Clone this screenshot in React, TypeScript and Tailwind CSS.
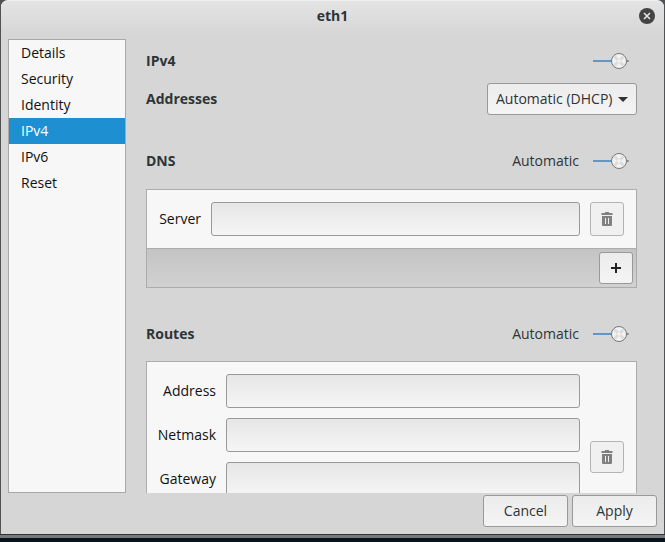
import { useId } from "react";
import type { ReactNode } from "react";

const raised =
  "rounded-[3px] border border-[#999] bg-linear-to-b from-[#ececec] to-[#f4f4f4] text-[#2e3436]";

function Switch({ label, name }: { label?: string; name: string }) {
  return (
    <label className="flex items-center gap-3.5 pr-2">
      {label && <span>{label}</span>}
      <span className="relative block h-4 w-9">
        <input
          type="checkbox"
          role="switch"
          defaultChecked
          aria-label={name}
          className="absolute inset-0 m-0 appearance-none"
        />
        <svg viewBox="0 0 36 16" className="pointer-events-none block h-4 w-9" aria-hidden="true">
          <rect x="0" y="7" width="19" height="2" fill="#5e97c8" />
          <rect x="33" y="7" width="3" height="2" rx="1" fill="#8a8d8f" />
          <circle cx="26" cy="8" r="7.5" fill="#f3f3f3" stroke="#777" />
          <path d="M21.5 3.5l9 9M30.5 3.5l-9 9" stroke="#dcdcdc" strokeWidth="3" />
          <circle cx="26" cy="8" r="1.8" fill="#f3f3f3" />
        </svg>
      </span>
    </label>
  );
}

function Section({ title, children }: { title: string; children: ReactNode }) {
  return (
    <div className="flex h-8 items-center justify-between">
      <h2 className="font-bold">{title}</h2>
      {children}
    </div>
  );
}

function Field({ label, labelWidth }: { label: string; labelWidth: string }) {
  const id = useId();
  return (
    <div className="flex items-center gap-2.5">
      <label htmlFor={id} className={`${labelWidth} flex shrink-0 justify-end text-[#111]`}>
        {label}
      </label>
      <input
        id={id}
        type="text"
        className="h-[34px] min-w-0 flex-1 rounded-[3px] border border-[#999] bg-linear-to-b from-[#e6e6e6] to-[#f5f5f5] px-2 outline-none"
      />
    </div>
  );
}

function TrashButton({ name, height }: { name: string; height: string }) {
  return (
    <button
      type="button"
      aria-label={name}
      className={`${height} flex w-[34px] shrink-0 items-center justify-center rounded-[3px] border border-[#b4b4b4] bg-[#f0f0f0]`}
    >
      <svg viewBox="0 0 12 14" className="h-3.5 w-3" fill="#808080" aria-hidden="true">
        <path d="M4 0h4v1h3.5v2H.5V1H4z" />
        <path fillRule="evenodd" d="M1 4h10v9q0 1-1 1H2q-1 0-1-1zM4 6v6h1V6zM7 6v6h1V6z" />
      </svg>
    </button>
  );
}

const pages = ["Details", "Security", "Identity", "IPv4", "IPv6", "Reset"];

export default function App() {
  return (
    <div className="flex h-screen flex-col bg-[#06131b] font-['Open_Sans','Noto_Sans',sans-serif] text-[14px] leading-5 text-[#2e3436]">
      <div className="flex min-h-0 flex-1 flex-col bg-[#505254] px-px">
        <div className="flex min-h-0 flex-1 flex-col rounded-t-[7px] border-t border-[#efefef] bg-[#d6d6d6] bg-linear-to-b from-[#e4e4e4] to-[#d6d6d6] to-[34px]">
          <header className="grid h-[30px] shrink-0 grid-cols-[1fr_auto_1fr] items-center px-[9px]">
            <h1 className="col-start-2 font-bold">eth1</h1>
            <button type="button" aria-label="Close" className="size-4 justify-self-end">
              <svg viewBox="0 0 16 16" className="size-4" aria-hidden="true">
                <circle cx="8" cy="8" r="8" fill="#444" />
                <path d="M5 5l6 6M11 5l-6 6" stroke="#e4e4e4" strokeWidth="1.6" />
              </svg>
            </button>
          </header>
          <div className="flex min-h-0 flex-1 px-[7px] pt-2">
            <nav className="w-[118px] shrink-0 border border-[#a8a8a8] bg-[#f7f7f7]">
              {pages.map((page) => (
                <a
                  key={page}
                  href="#"
                  aria-current={page === "IPv4" ? "page" : undefined}
                  className={
                    page === "IPv4"
                      ? "block h-[26px] bg-[#1e90d2] px-3 leading-[26px] text-white"
                      : "block h-[26px] px-3 leading-[26px] text-[#111]"
                  }
                >
                  {page}
                </a>
              ))}
            </nav>
            <main className="min-w-0 flex-1 overflow-hidden px-5 pt-1.5">
              <Section title="IPv4">
                <Switch name="IPv4" />
              </Section>
              <div className="mt-1.5 flex h-8 items-center justify-between">
                <label htmlFor="method" className="font-bold">
                  Addresses
                </label>
                <div className="relative">
                  <select
                    id="method"
                    className={`${raised} h-8 w-[150px] appearance-none pr-5 pl-2 outline-none`}
                  >
                    <option>Automatic (DHCP)</option>
                  </select>
                  <svg
                    viewBox="0 0 10 5"
                    className="pointer-events-none absolute top-3.5 right-[9px] h-[5px] w-2.5"
                    fill="#2e3436"
                    aria-hidden="true"
                  >
                    <path d="M0 0h10L5 5z" />
                  </svg>
                </div>
              </div>
              <div className="mt-[30px]">
                <Section title="DNS">
                  <Switch label="Automatic" name="Automatic DNS" />
                </Section>
              </div>
              <div className="mt-3 border border-[#acacac] bg-[#f7f7f7]">
                <div className="flex items-center gap-2.5 p-3">
                  <div className="flex-1">
                    <Field label="Server" labelWidth="w-[42px]" />
                  </div>
                  <TrashButton name="Delete server" height="h-[34px]" />
                </div>
                <div className="flex justify-end border-t border-[#acacac] bg-linear-to-b from-[#c4c4c4] to-[#d1d1d1] p-[3px]">
                  <button
                    type="button"
                    aria-label="Add server"
                    className={`${raised} flex h-8 w-[34px] items-center justify-center`}
                  >
                    <svg viewBox="0 0 10 10" className="size-2.5" fill="#222" aria-hidden="true">
                      <path d="M4 0h2v4h4v2H6v4H4V6H0V4h4z" />
                    </svg>
                  </button>
                </div>
              </div>
              <div className="mt-[30px]">
                <Section title="Routes">
                  <Switch label="Automatic" name="Automatic routes" />
                </Section>
              </div>
              <div className="mt-[11px] flex items-center gap-2.5 border border-[#acacac] bg-[#f7f7f7] p-3">
                <div className="flex flex-1 flex-col gap-2.5 pb-11">
                  <Field label="Address" labelWidth="w-[57px]" />
                  <Field label="Netmask" labelWidth="w-[57px]" />
                  <Field label="Gateway" labelWidth="w-[57px]" />
                </div>
                <TrashButton name="Delete route" height="h-8" />
              </div>
            </main>
          </div>
          <footer className="flex justify-end gap-1 px-[7px] pt-0.5 pb-[7px]">
            <button type="button" className={`${raised} h-8 w-[85px]`}>
              Cancel
            </button>
            <button type="button" className={`${raised} h-8 w-[85px]`}>
              Apply
            </button>
          </footer>
        </div>
      </div>
      <div className="h-1 shrink-0 border-t border-[#343434] bg-[#74787a]" />
      <div className="h-1 shrink-0" />
    </div>
  );
}
